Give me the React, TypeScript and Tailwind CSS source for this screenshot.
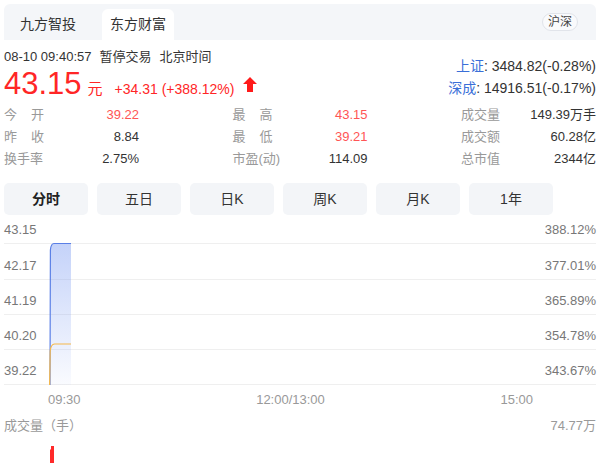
import React from "react";

const stats = [
  [
    { label: ["今", "开"], value: "39.22", red: true },
    { label: ["昨", "收"], value: "8.84" },
    { label: ["换手率"], value: "2.75%" },
  ],
  [
    { label: ["最", "高"], value: "43.15", red: true },
    { label: ["最", "低"], value: "39.21", red: true },
    { label: ["市盈(动)"], value: "114.09" },
  ],
  [
    { label: ["成交量"], value: "149.39万手" },
    { label: ["成交额"], value: "60.28亿" },
    { label: ["总市值"], value: "2344亿" },
  ],
];

const periods = ["分时", "五日", "日K", "周K", "月K", "1年"];

const levels = [
  { price: "43.15", pct: "388.12%", h: "h-[29px]" },
  { price: "42.17", pct: "377.01%", h: "h-[36px]" },
  { price: "41.19", pct: "365.89%", h: "h-[35px]" },
  { price: "40.20", pct: "354.78%", h: "h-[35px]" },
  { price: "39.22", pct: "343.67%", h: "h-[35px]" },
];

const App: React.FC = () => {
  return (
    <div className="w-[600px] h-[471px] overflow-hidden bg-white px-1 pt-1 text-[#333] font-['Liberation_Sans','Noto_Sans_CJK_SC',sans-serif]">
      {/* Tabs */}
      <div className="flex h-9 justify-between rounded-t-[6px] bg-[#f4f6f9] pl-2 pr-[18px]">
        <div className="flex items-end gap-[18px]">
          <div className="flex h-[31px] items-center px-2 text-[14px] text-[#333]">
            九方智投
          </div>
          <div className="flex h-[31px] items-center rounded-t-[6px] bg-white px-2 text-[14px] text-[#333]">
            东方财富
          </div>
        </div>
        <div className="flex items-center">
          <span className="flex h-[18px] items-center rounded-full border border-[#e1e4ea] bg-[#f9fafc] px-[5px] text-[12px] text-[#444]">
            沪深
          </span>
        </div>
      </div>

      {/* Quote header */}
      <div className="flex justify-between">
        <div className="pt-[9px]">
          <div className="flex gap-2 text-[13px] leading-4 text-[#333]">
            <span>08-10 09:40:57</span>
            <span>暂停交易</span>
            <span>北京时间</span>
          </div>
          <div className="mt-[2px] flex h-[34px] items-baseline text-[#ff2626]">
            <span className="text-[31px] leading-[34px]">43.15</span>
            <span className="ml-[6px] text-[15px]">元</span>
            <span className="ml-3 text-[14px]">+34.31 (+388.12%)</span>
            <svg
              className="ml-[9px] self-center"
              width="14"
              height="15"
              viewBox="0 0 14 15"
            >
              <polygon points="7,0 14,7 10,7 10,15 4,15 4,7 0,7" fill="#ff1a1a" />
            </svg>
          </div>
        </div>
        <div className="pt-[15px] text-right text-[14px] leading-[22px] text-[#333]">
          <div>
            <span className="text-[#3a6fd8]">上证</span>: 3484.82(-0.28%)
          </div>
          <div>
            <span className="text-[#3a6fd8]">深成</span>: 14916.51(-0.17%)
          </div>
        </div>
      </div>

      {/* Stats */}
      <div className="mt-[3px] flex justify-between">
        {stats.map((col, i) => (
          <div key={i} className="flex w-[135px] flex-col">
            {col.map((s) => (
              <div
                key={s.value}
                className="flex h-[22px] items-center justify-between text-[13px]"
              >
                {s.label.length === 2 ? (
                  <span className="flex w-[40px] justify-between text-[#999]">
                    <span>{s.label[0]}</span>
                    <span>{s.label[1]}</span>
                  </span>
                ) : (
                  <span className="text-[#999]">{s.label[0]}</span>
                )}
                <span className={s.red ? "text-[#f55]" : "text-[#333]"}>
                  {s.value}
                </span>
              </div>
            ))}
          </div>
        ))}
      </div>

      {/* Period buttons */}
      <div className="mt-[13px] flex gap-[9px]">
        {periods.map((p, i) => (
          <div
            key={p}
            className={`flex h-8 w-[84px] items-center justify-center rounded-[5px] bg-[#f3f5f8] text-[14px] ${
              i === 0 ? "font-bold text-[#222]" : "text-[#333]"
            }`}
          >
            {p}
          </div>
        ))}
      </div>

      {/* Chart */}
      <div className="relative">
        {levels.map((l) => (
          <div
            key={l.price}
            className={`flex items-end justify-between border-b border-[#efefef] pb-[5px] text-[13px] leading-4 text-[#777] ${l.h}`}
          >
            <span>{l.price}</span>
            <span>{l.pct}</span>
          </div>
        ))}
        <svg
          className="pointer-events-none absolute left-0 top-0"
          width="592"
          height="170"
          viewBox="0 0 592 170"
        >
          <defs>
            <linearGradient id="fillBlue" x1="0" y1="0" x2="0" y2="1">
              <stop offset="0" stopColor="#7d9cf2" stopOpacity="0.45" />
              <stop offset="1" stopColor="#7d9cf2" stopOpacity="0.04" />
            </linearGradient>
          </defs>
          <path
            d="M46 170 L46.4 35 Q47 28.5 50 28.5 L67 28.5 L67 170 Z"
            fill="url(#fillBlue)"
          />
          <path
            d="M46 170 L46.4 35 Q47 28.5 50 28.5 L67 28.5"
            fill="none"
            stroke="#5a7fe6"
            strokeWidth="1.2"
          />
          <path
            d="M45.6 170 L46.2 136 Q47 129 50.5 129 L67 129"
            fill="none"
            stroke="#f5b84a"
            strokeWidth="1.2"
          />
        </svg>
      </div>

      {/* Time axis */}
      <div className="flex h-[28px] w-[529px] items-center justify-between pl-[44px] pt-[2px] text-[13px] text-[#999]">
        <span>09:30</span>
        <span>12:00/13:00</span>
        <span>15:00</span>
      </div>

      {/* Volume */}
      <div className="mt-[2px] flex h-[22px] items-center justify-between text-[13px] text-[#999]">
        <span>成交量（手）</span>
        <span>74.77万</span>
      </div>
      <div className="flex h-[24px] items-start pl-[45px] pt-[9px]">
        <svg width="6" height="17" viewBox="0 0 6 17">
          <polygon points="2,0 5,0 5,17 1,17 1,4 2,3" fill="#ff2a2a" />
        </svg>
      </div>
    </div>
  );
};

export default App;
